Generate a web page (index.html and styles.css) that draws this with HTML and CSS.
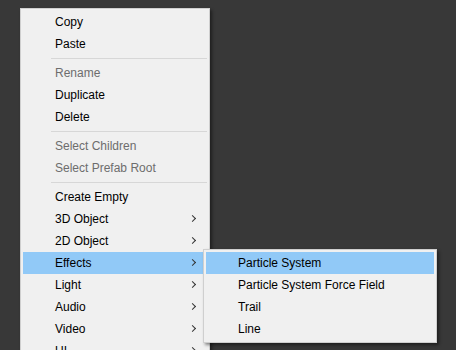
FILE: index.html
```html
<!DOCTYPE html>
<html lang="en">
<head>
  <meta charset="UTF-8">
  <title>Context Menu</title>
  <link rel="stylesheet" href="styles.css">
</head>
<body>
  <div class="menu">
    <div class="item">Copy</div>
    <div class="item">Paste</div>
    <div class="sep"></div>
    <div class="item disabled">Rename</div>
    <div class="item">Duplicate</div>
    <div class="item">Delete</div>
    <div class="sep"></div>
    <div class="item disabled">Select Children</div>
    <div class="item disabled">Select Prefab Root</div>
    <div class="sep"></div>
    <div class="item">Create Empty</div>
    <div class="item sub">3D Object</div>
    <div class="item sub">2D Object</div>
    <div class="item sub active">Effects
      <div class="menu submenu">
        <div class="item active">Particle System</div>
        <div class="item">Particle System Force Field</div>
        <div class="item">Trail</div>
        <div class="item">Line</div>
      </div>
    </div>
    <div class="item sub">Light</div>
    <div class="item sub">Audio</div>
    <div class="item sub">Video</div>
    <div class="item sub">UI</div>
  </div>
</body>
</html>
```
FILE: styles.css
```css
html, body {
  margin: 0;
  height: 100%;
  overflow: hidden;
}
body {
  background-color: #383838;
  font-family: "Liberation Sans", Arial, sans-serif;
  font-size: 12px;
  color: #000;
  padding: 8px 0 0 20px;
  box-sizing: border-box;
}
.menu {
  width: 190px;
  box-sizing: border-box;
  background-color: #f0f0f0;
  border: 1px solid #cfcfcf;
  padding: 2px;
  box-shadow: 2px 2px 3px rgba(0, 0, 0, 0.45);
}
.item {
  position: relative;
  height: 22px;
  line-height: 22px;
  padding-left: 32px;
  white-space: nowrap;
}
.item.active {
  background-color: #91c9f7;
}
.item.disabled {
  color: #6d6d6d;
}
.item.sub::after {
  content: "";
  position: absolute;
  right: 12px;
  top: 8px;
  width: 4px;
  height: 4px;
  border-top: 1px solid #333;
  border-right: 1px solid #333;
  transform: rotate(45deg);
}
.sep {
  height: 1px;
  margin: 3px 0 3px 28px;
  background-color: #d7d7d7;
}
.submenu {
  position: absolute;
  left: 180px;
  top: -3px;
  width: 234px;
  z-index: 2;
  color: #000;
}
```
